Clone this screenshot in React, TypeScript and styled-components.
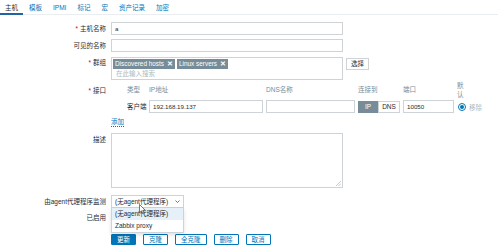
import React from 'react';
import styled, { createGlobalStyle } from 'styled-components';

const Global = createGlobalStyle`
  html, body { margin: 0; padding: 0; background: #fff; }
  body {
    font-family: "Liberation Sans", Arial, "Noto Sans CJK SC", sans-serif;
    font-size: 6.5px;
    color: #1f2c33;
  }
  #root { width: 498px; height: 249px; overflow: hidden; position: relative; }
  * { box-sizing: border-box; }
`;

const BLUE = '#0275b8';
const BORDER = '#cdd3d6';
const GREY = '#768d99';

const TabBar = styled.nav`
  display: flex;
  height: 15px;
  gap: 1px;
  box-shadow: inset 0 -1px 0 #ebeef0;
`;

const Tab = styled.span<{ $active?: boolean }>`
  height: 15px;
  padding: 2px 5px 0;
  line-height: 11px;
  color: ${(p) => (p.$active ? '#1f2c33' : BLUE)};
  border-bottom: 2px solid ${(p) => (p.$active ? '#1f65a6' : 'transparent')};
`;

const Form = styled.div`
  display: flex;
  flex-direction: column;
  padding-top: 7px;
`;

const Row = styled.div<{ $gap: number }>`
  display: flex;
  align-items: flex-start;
  margin-top: ${(p) => p.$gap}px;
  position: relative;
`;

const Label = styled.div<{ $lh?: number; $pt?: number }>`
  width: 106px;
  flex: none;
  margin-right: 5px;
  text-align: right;
  line-height: ${(p) => p.$lh ?? 13}px;
  padding-top: ${(p) => p.$pt ?? 0}px;
  white-space: nowrap;
`;

const Req = styled.span`
  color: #d40000;
  margin-right: 2px;
`;

const TextInput = styled.div<{ $w: number }>`
  width: ${(p) => p.$w}px;
  height: 13px;
  border: 1px solid ${BORDER};
  padding: 0 3px;
  line-height: 11px;
  font-size: 6.2px;
  background: #fff;
  white-space: nowrap;
  overflow: hidden;
`;

const Multi = styled.div`
  width: 232px;
  height: 23px;
  border: 1px solid ${BORDER};
  padding: 1px 1px;
`;

const Tags = styled.div`
  display: flex;
  gap: 2px;
`;

const TagChip = styled.span`
  display: inline-flex;
  align-items: center;
  gap: 3px;
  height: 10px;
  padding: 0 2px;
  background: ${GREY};
  color: #fff;
  font-size: 6.4px;
  line-height: 10px;
`;

const TagX = styled.b`
  font-size: 6.5px;
  font-weight: bold;
`;

const Placeholder = styled.div`
  color: #acbbc2;
  padding-left: 3px;
  line-height: 10px;
`;

const SideButton = styled.div`
  margin: 1px 0 0 3px;
  width: 23px;
  height: 12px;
  border: 1px solid ${BORDER};
  text-align: center;
  line-height: 10px;
  background: #fff;
`;

const IfaceGrid = styled.div`
  display: grid;
  grid-template-columns: 13px 19px 114px 89px 42px 51px auto;
  column-gap: 3px;
  row-gap: 1px;
  align-items: center;
`;

const Head = styled.div<{ $narrow?: boolean }>`
  color: ${GREY};
  line-height: 8.5px;
  width: ${(p) => (p.$narrow ? '7px' : 'auto')};
  white-space: ${(p) => (p.$narrow ? 'normal' : 'nowrap')};
`;

const TypeCell = styled.div`
  white-space: nowrap;
  line-height: 12px;
`;

const Seg = styled.div`
  display: flex;
  height: 12px;
`;

const SegBtn = styled.div<{ $on?: boolean; $w: number }>`
  width: ${(p) => p.$w}px;
  text-align: center;
  line-height: ${(p) => (p.$on ? 12 : 10)}px;
  background: ${(p) => (p.$on ? GREY : '#fff')};
  color: ${(p) => (p.$on ? '#fff' : '#1f2c33')};
  border: ${(p) => (p.$on ? 'none' : `1px solid ${BORDER}`)};
`;

const DefaultCell = styled.div`
  display: flex;
  align-items: center;
  gap: 3px;
  padding-left: 1px;
`;

const Radio = styled.span`
  width: 8px;
  height: 8px;
  border-radius: 50%;
  border: 1px solid ${BLUE};
  display: flex;
  align-items: center;
  justify-content: center;
  &::after {
    content: '';
    width: 4px;
    height: 4px;
    border-radius: 50%;
    background: ${BLUE};
  }
`;

const Muted = styled.span`
  color: #acbbc2;
`;

const Link = styled.span`
  color: ${BLUE};
  line-height: 9px;
  border-bottom: 1px dotted ${BLUE};
`;

const TextArea = styled.div`
  width: 232px;
  height: 55px;
  border: 1px solid ${BORDER};
  position: relative;
`;

const Grip = styled.svg`
  position: absolute;
  right: 1px;
  bottom: 1px;
`;

const SelectWrap = styled.div`
  position: relative;
  z-index: 2;
`;

const SelectBox = styled.div`
  width: 73px;
  height: 13px;
  border: 1px solid ${BORDER};
  padding: 0 3px;
  display: flex;
  align-items: center;
  justify-content: space-between;
  line-height: 11px;
  background: #fff;
  white-space: nowrap;
`;

const Dropdown = styled.div`
  position: absolute;
  top: 13px;
  left: 0;
  width: 73px;
  border: 1px solid ${BORDER};
  border-top: none;
  background: #fff;
  box-shadow: 0 2px 4px rgba(0, 0, 0, 0.12);
`;

const Option = styled.div<{ $hl?: boolean }>`
  height: 12px;
  line-height: 12px;
  padding: 0 3px;
  background: ${(p) => (p.$hl ? '#e6f0f8' : '#fff')};
  white-space: nowrap;
`;

const Cursor = styled.svg`
  position: absolute;
  left: 28px;
  top: 9px;
`;

const Check = styled.span`
  width: 10px;
  height: 10px;
  margin-top: 1px;
  border: 1px solid ${BORDER};
`;

const Buttons = styled.div`
  display: flex;
  gap: 7px;
`;

const Btn = styled.div<{ $primary?: boolean }>`
  height: 11px;
  padding: 0 5px;
  line-height: 9px;
  border: 1px solid ${BLUE};
  border-radius: 1px;
  background: ${(p) => (p.$primary ? BLUE : '#fff')};
  color: ${(p) => (p.$primary ? '#fff' : BLUE)};
  white-space: nowrap;
`;

const tabs = ['主机', '模板', 'IPMI', '标记', '宏', '资产记录', '加密'];

export default function App() {
  return (
    <>
      <Global />
      <TabBar>
        {tabs.map((t, i) => (
          <Tab key={t} $active={i === 0}>
            {t}
          </Tab>
        ))}
      </TabBar>
      <Form>
        <Row $gap={0}>
          <Label>
            <Req>*</Req>主机名称
          </Label>
          <TextInput $w={232}>a</TextInput>
        </Row>
        <Row $gap={4}>
          <Label>可见的名称</Label>
          <TextInput $w={232} />
        </Row>
        <Row $gap={5}>
          <Label $lh={11}>
            <Req>*</Req>群组
          </Label>
          <Multi>
            <Tags>
              <TagChip>
                Discovered hosts <TagX>✕</TagX>
              </TagChip>
              <TagChip>
                Linux servers <TagX>✕</TagX>
              </TagChip>
            </Tags>
            <Placeholder>在此输入搜索</Placeholder>
          </Multi>
          <SideButton>选择</SideButton>
        </Row>
        <Row $gap={2}>
          <Label $lh={17}>
            <Req>*</Req>接口
          </Label>
          <IfaceGrid>
            <span />
            <Head>类型</Head>
            <Head>IP地址</Head>
            <Head>DNS名称</Head>
            <Head>连接到</Head>
            <Head>端口</Head>
            <Head $narrow>默认</Head>
            <span />
            <TypeCell>客户端</TypeCell>
            <TextInput $w={114}>192.168.19.137</TextInput>
            <TextInput $w={89} />
            <Seg>
              <SegBtn $on $w={20}>
                IP
              </SegBtn>
              <SegBtn $w={22}>DNS</SegBtn>
            </Seg>
            <TextInput $w={51}>10050</TextInput>
            <DefaultCell>
              <Radio />
              <Muted>移除</Muted>
            </DefaultCell>
          </IfaceGrid>
        </Row>
        <Row $gap={4}>
          <Label $lh={9} />
          <Link>添加</Link>
        </Row>
        <Row $gap={6}>
          <Label $lh={9} $pt={2}>
            描述
          </Label>
          <TextArea>
            <Grip width="5" height="5" viewBox="0 0 5 5">
              <path d="M5 0 L0 5 M5 2.5 L2.5 5" stroke="#b0b8bc" strokeWidth="0.7" />
            </Grip>
          </TextArea>
        </Row>
        <Row $gap={7}>
          <Label>由agent代理程序监测</Label>
          <SelectWrap>
            <SelectBox>
              <span>(无agent代理程序)</span>
              <svg width="5" height="3" viewBox="0 0 5 3">
                <path d="M0.5 0.5 L2.5 2.5 L4.5 0.5" fill="none" stroke="#555" strokeWidth="0.8" />
              </svg>
            </SelectBox>
            <Dropdown>
              <Option $hl>(无agent代理程序)</Option>
              <Option>Zabbix proxy</Option>
            </Dropdown>
            <Cursor width="7" height="11" viewBox="0 0 7 11">
              <path d="M0.5 0.5 L0.5 8.5 L2.5 6.8 L4 10 L5.2 9.4 L3.8 6.3 L6.3 6.3 Z" fill="#fff" stroke="#222" strokeWidth="0.6" />
            </Cursor>
          </SelectWrap>
        </Row>
        <Row $gap={4}>
          <Label $lh={12}>已启用</Label>
          <Check />
        </Row>
        <Row $gap={10}>
          <Label />
          <Buttons>
            <Btn $primary>更新</Btn>
            <Btn>克隆</Btn>
            <Btn>全克隆</Btn>
            <Btn>删除</Btn>
            <Btn>取消</Btn>
          </Buttons>
        </Row>
      </Form>
    </>
  );
}
